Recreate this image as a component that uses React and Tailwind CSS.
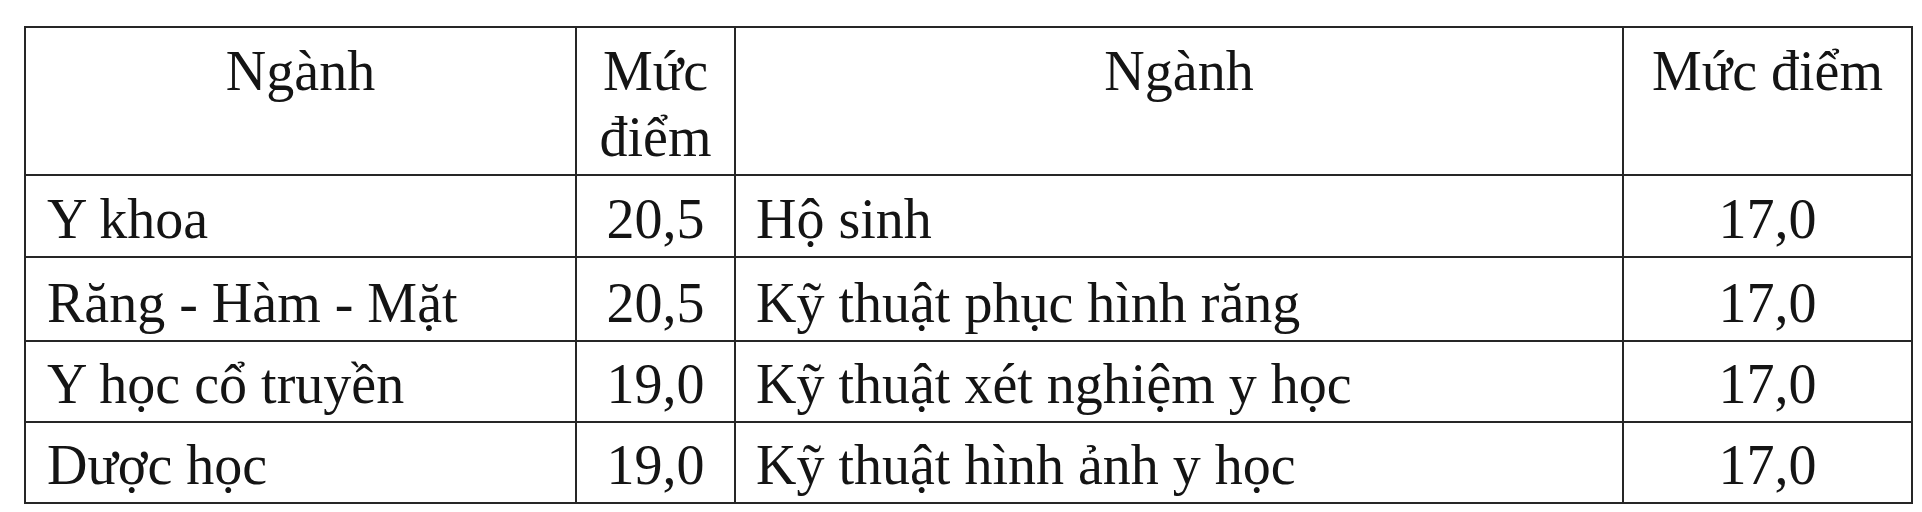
export default function App() {
  const rows = [
    { h: "h-[82px]", a: "Y khoa", b: "20,5", c: "Hộ sinh", d: "17,0" },
    { h: "h-[84px]", a: "Răng - Hàm - Mặt", b: "20,5", c: "Kỹ thuật phục hình răng", d: "17,0" },
    { h: "h-[81px]", a: "Y học cổ truyền", b: "19,0", c: "Kỹ thuật xét nghiệm y học", d: "17,0" },
    { h: "h-[81px]", a: "Dược học", b: "19,0", c: "Kỹ thuật hình ảnh y học", d: "17,0" },
  ];
  const cell = "border-r-2 border-b-2 border-[#262626]";
  const dataCell = `${cell} flex items-end pb-[4px]`;
  return (
    <div className="min-h-[512px] w-[1922px] bg-white pt-[26px] pl-[24px] text-[56px] leading-[66px] text-[#141414] [font-family:'Liberation_Serif','Times_New_Roman',serif]">
      <div className="grid w-fit grid-cols-[551px_159px_888px_289px] border-l-2 border-t-2 border-[#262626]">
        <div className={`${cell} h-[148px] pt-[10px] text-center`}>Ngành</div>
        <div className={`${cell} h-[148px] pt-[10px] text-center`}>Mức điểm</div>
        <div className={`${cell} h-[148px] pt-[10px] text-center`}>Ngành</div>
        <div className={`${cell} h-[148px] pt-[10px] text-center`}>Mức điểm</div>
        {rows.map((r, i) => (
          <div key={i} className="contents">
            <div className={`${dataCell} ${r.h} pl-[21px]`}>{r.a}</div>
            <div className={`${dataCell} ${r.h} justify-center`}>{r.b}</div>
            <div className={`${dataCell} ${r.h} pl-[20px]`}>{r.c}</div>
            <div className={`${dataCell} ${r.h} justify-center`}>{r.d}</div>
          </div>
        ))}
      </div>
    </div>
  );
}
